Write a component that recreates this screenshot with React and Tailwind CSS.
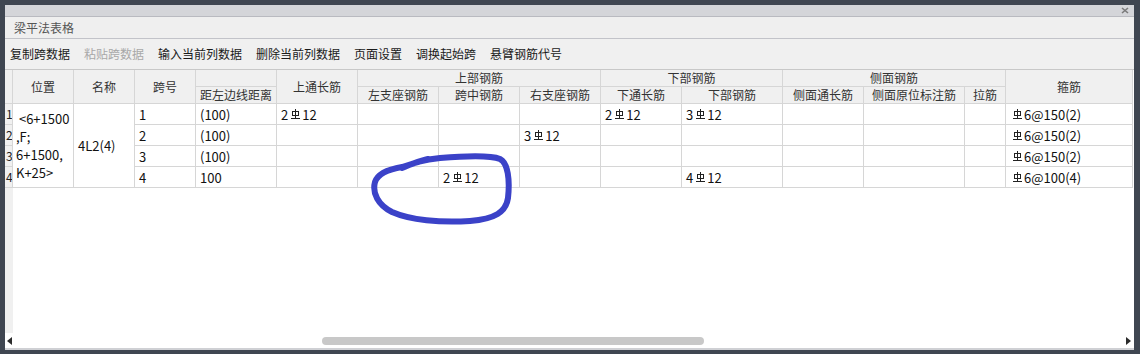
import React from "react";

const FONT = "font-['Noto_Sans_CJK_SC','Noto_Sans',sans-serif]";

function Sym() {
  return (
    <svg width="9" height="11" viewBox="0 0 9 11" className="ml-[3px] mr-[2px] shrink-0" shapeRendering="crispEdges">
      <path d="M4.5 0 V9" stroke="#222" strokeWidth="1" fill="none" />
      <rect x="1.5" y="2.5" width="6" height="4" stroke="#222" strokeWidth="1" fill="none" />
      <path d="M0 9.5 H9" stroke="#222" strokeWidth="1" fill="none" />
    </svg>
  );
}

function R({ pre, post }) {
  return (
    <span className="inline-flex items-center">
      {pre ? <span>{pre}</span> : null}
      <Sym />
      <span>{post}</span>
    </span>
  );
}

const B = "border-r border-b border-[#d6d6d6]";
const H = `${B} bg-[#f0f0f0] flex items-center justify-center text-[12px] text-[#333] leading-none whitespace-nowrap overflow-hidden`;
const D = `${B} bg-white flex items-center pl-[4px] text-[13px] text-[#111] leading-none whitespace-nowrap overflow-hidden`;
const RN = `${B} bg-[#f0f0f0] flex items-center pl-[1px] text-[12px] text-[#222] leading-none overflow-hidden`;

const rows = [
  { n: "1", span: "1", dist: "(100)", top: <R pre="2" post="12" />, l: null, m: null, r: null, bt: <R pre="2" post="12" />, b: <R pre="3" post="12" />, g: <R post="6@150(2)" /> },
  { n: "2", span: "2", dist: "(100)", top: null, l: null, m: null, r: <R pre="3" post="12" />, bt: null, b: null, g: <R post="6@150(2)" /> },
  { n: "3", span: "3", dist: "(100)", top: null, l: null, m: null, r: null, bt: null, b: null, g: <R post="6@150(2)" /> },
  { n: "4", span: "4", dist: "100", top: null, l: null, m: <R pre="2" post="12" />, r: null, bt: null, b: <R pre="4" post="12" />, g: <R post="6@100(4)" /> },
];

const rowStart = ["row-start-3", "row-start-4", "row-start-5", "row-start-6"];

export default function App() {
  return (
    <div className={`relative w-[1140px] h-[354px] bg-[#3f4651] pt-[5px] pl-[5px] pr-[6px] ${FONT}`}>
      <div className="w-[1129px] h-[345px] flex flex-col bg-white">
        {/* top strip */}
        <div className="h-[12px] shrink-0 bg-[#d4d5d9] border-b border-[#b9bac0] flex items-center justify-end pr-[5px]">
          <svg width="8" height="7" viewBox="0 0 8 7">
            <path d="M1 1 L7 6 M7 1 L1 6" stroke="#7a7a7a" strokeWidth="1.6" />
          </svg>
        </div>
        {/* title */}
        <div className="h-[22px] shrink-0 bg-[#efefef] border-b border-[#c2c3c9] flex items-center pl-[9px] text-[12px] text-[#555] leading-none">
          梁平法表格
        </div>
        {/* toolbar */}
        <div className="h-[31px] shrink-0 bg-[#f0f0f0] border-b border-[#c8c8c8] flex items-center pl-[5px] gap-[14px] text-[12px] text-[#1a1a1a] leading-none whitespace-nowrap">
          <span>复制跨数据</span>
          <span className="text-[#a8a8a8]">粘贴跨数据</span>
          <span>输入当前列数据</span>
          <span>删除当前列数据</span>
          <span>页面设置</span>
          <span>调换起始跨</span>
          <span>悬臂钢筋代号</span>
        </div>
        {/* table area */}
        <div className="h-[263px] shrink-0 flex flex-col">
          <div className="grid grid-cols-[8px_61px_61px_61px_81px_81px_81px_81px_81px_81px_101px_81px_101px_41px_127px] grid-rows-[17px_17px_21px_21px_21px_21px]">
            {/* header */}
            <div className={`${H} col-start-1 row-start-1 row-span-2`}></div>
            <div className={`${H} col-start-2 row-start-1 row-span-2`}>位置</div>
            <div className={`${H} col-start-3 row-start-1 row-span-2`}>名称</div>
            <div className={`${H} col-start-4 row-start-1 row-span-2`}>跨号</div>
            <div className={`${H} col-start-5 row-start-1`}></div>
            <div className={`${H} col-start-6 row-start-1 row-span-2`}>上通长筋</div>
            <div className={`${H} col-start-7 col-span-3 row-start-1`}>上部钢筋</div>
            <div className={`${H} col-start-10 col-span-2 row-start-1`}>下部钢筋</div>
            <div className={`${H} col-start-12 col-span-3 row-start-1`}>侧面钢筋</div>
            <div className={`${H} col-start-15 row-start-1 row-span-2`}>箍筋</div>
            <div className={`${H} col-start-5 row-start-2`}>距左边线距离</div>
            <div className={`${H} col-start-7 row-start-2`}>左支座钢筋</div>
            <div className={`${H} col-start-8 row-start-2`}>跨中钢筋</div>
            <div className={`${H} col-start-9 row-start-2`}>右支座钢筋</div>
            <div className={`${H} col-start-10 row-start-2`}>下通长筋</div>
            <div className={`${H} col-start-11 row-start-2`}>下部钢筋</div>
            <div className={`${H} col-start-12 row-start-2`}>侧面通长筋</div>
            <div className={`${H} col-start-13 row-start-2`}>侧面原位标注筋</div>
            <div className={`${H} col-start-14 row-start-2`}>拉筋</div>

            {/* merged cells */}
            <div className={`${B} bg-white col-start-2 row-start-3 row-span-4 flex flex-col justify-center pl-[3px] text-[13px] text-[#111] leading-[18px] whitespace-nowrap overflow-hidden`}>
              <span>&nbsp;&lt;6+1500</span>
              <span>,F;</span>
              <span>6+1500,</span>
              <span>K+25&gt;</span>
            </div>
            <div className={`${D} col-start-3 row-start-3 row-span-4`}>4L2(4)</div>

            {rows.map((r, i) => (
              <React.Fragment key={r.n}>
                <div className={`${RN} col-start-1 ${rowStart[i]}`}>{r.n}</div>
                <div className={`${D} col-start-4 ${rowStart[i]}`}>{r.span}</div>
                <div className={`${D} col-start-5 ${rowStart[i]}`}>{r.dist}</div>
                <div className={`${D} col-start-6 ${rowStart[i]}`}>{r.top}</div>
                <div className={`${D} col-start-7 ${rowStart[i]}`}>{r.l}</div>
                <div className={`${D} col-start-8 ${rowStart[i]}`}>{r.m}</div>
                <div className={`${D} col-start-9 ${rowStart[i]}`}>{r.r}</div>
                <div className={`${D} col-start-10 ${rowStart[i]}`}>{r.bt}</div>
                <div className={`${D} col-start-11 ${rowStart[i]}`}>{r.b}</div>
                <div className={`${D} col-start-12 ${rowStart[i]}`}></div>
                <div className={`${D} col-start-13 ${rowStart[i]}`}></div>
                <div className={`${D} col-start-14 ${rowStart[i]}`}></div>
                <div className={`${D} col-start-15 ${rowStart[i]}`}>{r.g}</div>
              </React.Fragment>
            ))}
          </div>
          <div className="flex-1 flex">
            <div className="w-[8px] bg-[#f0f0f0]"></div>
          </div>
        </div>
        {/* scrollbar */}
        <div className="h-[15px] shrink-0 flex items-center pl-[2px] pr-[3px] bg-white">
          <svg width="5" height="8" viewBox="0 0 5 8" className="shrink-0">
            <polygon points="5,0 5,8 0,4" fill="#2b2b2b" />
          </svg>
          <div className="w-[310px] shrink-0"></div>
          <div className="w-[382px] h-[8px] rounded-full bg-[#c8c8c8] shrink-0"></div>
          <div className="flex-1"></div>
          <svg width="5" height="8" viewBox="0 0 5 8" className="shrink-0">
            <polygon points="0,0 0,8 5,4" fill="#2b2b2b" />
          </svg>
        </div>
        <div className="h-[2px] shrink-0 bg-[#cfd0d4]"></div>
      </div>

      {/* hand-drawn annotation */}
      <svg className="absolute left-0 top-0 pointer-events-none" width="1140" height="354" viewBox="0 0 1140 354">
        <path
          d="M 402 168 C 412 164, 420 160, 440 158 C 465 156, 490 155, 500 159 C 508 163, 510 180, 508 198 C 506 212, 495 219, 470 221 C 440 223, 410 220, 392 212 C 378 205, 372 193, 375 182 C 378 173, 390 169, 402 167 C 412 164, 420 161, 428 159"
          stroke="#3b42c8"
          strokeWidth="6"
          fill="none"
          strokeLinecap="round"
          strokeLinejoin="round"
        />
      </svg>
    </div>
  );
}
